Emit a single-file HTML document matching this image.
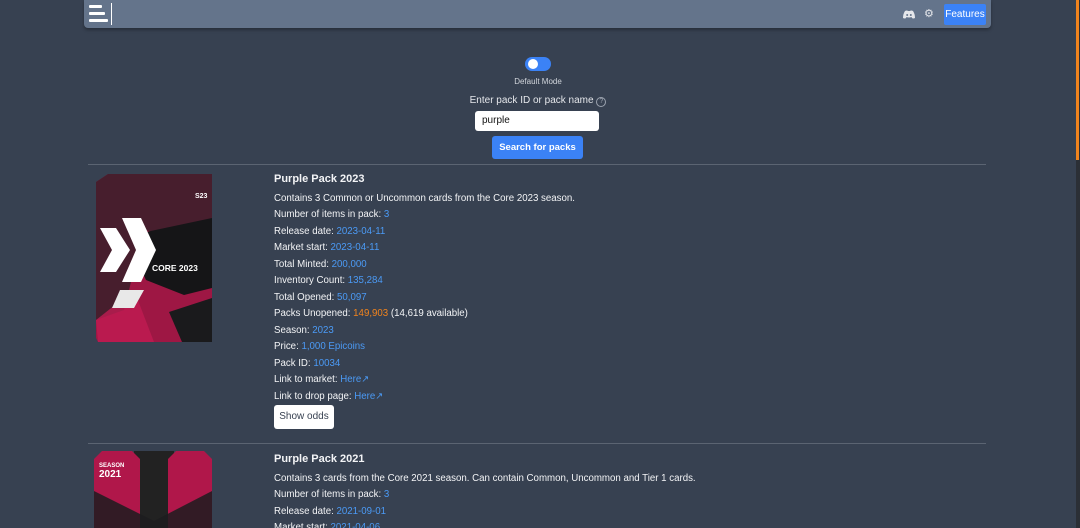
<!DOCTYPE html>
<html style="overflow:hidden;height:528px"><head><style>
body{margin:0;width:1080px;height:528px;overflow:hidden;background:#374151;font-family:"Liberation Sans",sans-serif;color:#f3f4f6;position:relative}
.nav{position:absolute;left:84px;top:0;width:907px;height:28px;background:#64748b;border-radius:0 0 4px 4px;box-shadow:0 2px 3px rgba(0,0,0,.3)}
.bar{position:absolute;left:5px;height:3px;background:#fff;border-radius:1px}
a,.b{color:#4b9af5}
.o{color:#f2841d}
.info{position:absolute;left:274px;font-size:9.7px;line-height:16.5px}
.info div{height:16.5px;white-space:nowrap}
.t{font-weight:bold;font-size:11px;margin-bottom:3px}
hr{position:absolute;left:88px;width:898px;border:0;border-top:1px solid #5b6472;margin:0}
</style></head><body>
<div class="nav">
<div class="bar" style="top:5px;width:13px"></div>
<div class="bar" style="top:12px;width:16px"></div>
<div class="bar" style="top:19px;width:19px"></div>
<div style="position:absolute;left:27px;top:3px;width:1px;height:22px;background:#fff"></div>
<svg style="position:absolute;left:819px;top:10px" width="12" height="9" viewBox="0 0 12 9"><path d="M2 1Q4 0 5 1H7Q8 0 10 1Q12 4 12 8Q10 9 9 8L8.5 7Q6 8 3.5 7L3 8Q2 9 0 8Q0 4 2 1Z" fill="#e5e7eb"/><circle cx="4.2" cy="5" r="1" fill="#64748b"/><circle cx="7.8" cy="5" r="1" fill="#64748b"/></svg>
<div style="position:absolute;left:840px;top:7px;font-size:11px;color:#e5e7eb">⚙</div>
<div style="position:absolute;left:860px;top:4px;width:42px;height:21px;background:#3b82f6;border-radius:2px;color:#fff;font-size:10px;line-height:21px;text-align:center">Features</div>
</div>
<div style="position:absolute;left:525px;top:57px;width:26px;height:14px;border-radius:7px;background:#3b82f6"><div style="position:absolute;left:3px;top:2px;width:10px;height:10px;border-radius:5px;background:#fff"></div></div>
<div style="position:absolute;left:0;width:1076px;top:77px;text-align:center;font-size:8px;color:#d1d5db">Default Mode</div>
<div style="position:absolute;left:0;width:1076px;top:95px;text-align:center;font-size:10px;color:#e5e7eb">Enter pack ID or pack name <span style="display:inline-block;width:8px;height:8px;border:1px solid #9ca3af;border-radius:50%;font-size:7px;line-height:8px;color:#9ca3af">?</span></div>
<div style="position:absolute;left:475px;top:111px;width:117px;height:20px;background:#fff;border-radius:3px;color:#111;font-size:10px;line-height:20px;padding-left:7px">purple</div>
<div style="position:absolute;left:492px;top:136px;width:91px;height:23px;background:#3b82f6;border-radius:3px;color:#fff;font-size:9.5px;font-weight:bold;line-height:23px;text-align:center">Search for packs</div>
<hr style="top:164px">
<svg style="position:absolute;left:94px;top:170px" width="120" height="173" viewBox="0 0 120 173">
<polygon points="2,12 14,4 118,4 118,168 112,172 4,172 2,168" fill="#9e1744"/>
<polygon points="2,12 14,4 118,4 118,60 100,70 50,60 30,140 2,150" fill="#2a2226" opacity=".75"/>
<polygon points="2,150 40,120 60,172 4,172" fill="#c01c52" opacity=".8"/>
<polygon points="52,62 118,48 118,118 90,125 52,110 40,85" fill="#151517"/>
<polygon points="75,142 118,128 118,172 88,172" fill="#1a1a1c"/>
<polygon points="28,48 47,48 62,80 47,112 28,112 42,80" fill="#fff"/>
<polygon points="6,58 22,58 36,80 22,102 6,102 18,80" fill="#fff"/>
<polygon points="26,120 50,120 40,138 18,138" fill="#e8e8e8"/>
<text x="58" y="101" fill="#fff" font-size="8.5" font-weight="bold" font-family="Liberation Sans">CORE 2023</text>
<text x="101" y="28" fill="#fff" font-size="7" font-weight="bold" font-family="Liberation Sans">S23</text>
</svg>
<div class="info" style="top:171px">
<div class="t">Purple Pack 2023</div>
<div>Contains 3 Common or Uncommon cards from the Core 2023 season.</div>
<div>Number of items in pack: <a>3</a></div>
<div>Release date: <a>2023-04-11</a></div>
<div>Market start: <a>2023-04-11</a></div>
<div>Total Minted: <a>200,000</a></div>
<div>Inventory Count: <a>135,284</a></div>
<div>Total Opened: <a>50,097</a></div>
<div>Packs Unopened: <span class="o">149,903</span> (14,619 available)</div>
<div>Season: <a>2023</a></div>
<div>Price: <a>1,000 Epicoins</a></div>
<div>Pack ID: <a>10034</a></div>
<div>Link to market: <a>Here↗</a></div>
<div>Link to drop page: <a>Here↗</a></div>
</div>
<div style="position:absolute;left:274px;top:405px;width:60px;height:24px;background:#fff;border-radius:3px;color:#374151;font-size:10px;line-height:24px;text-align:center">Show odds</div>
<hr style="top:443px">
<svg style="position:absolute;left:94px;top:451px" width="120" height="77" viewBox="0 0 120 77">
<rect x="40" y="0" width="40" height="77" fill="#222"/>
<polygon points="0,8 8,0 38,0 46,8 46,77 0,77" fill="#b0174a"/>
<polygon points="74,8 82,0 110,0 118,8 118,77 74,77" fill="#b0174a"/>
<polygon points="0,40 60,70 118,40 118,77 0,77" fill="#1c1c1e" opacity=".85"/>
<text x="5" y="16" fill="#fff" font-size="6" font-weight="bold" font-family="Liberation Sans">SEASON</text>
<text x="5" y="26" fill="#fff" font-size="10" font-weight="bold" font-family="Liberation Sans">2021</text>
</svg>
<div class="info" style="top:451px">
<div class="t">Purple Pack 2021</div>
<div>Contains 3 cards from the Core 2021 season. Can contain Common, Uncommon and Tier 1 cards.</div>
<div>Number of items in pack: <a>3</a></div>
<div>Release date: <a>2021-09-01</a></div>
<div>Market start: <a>2021-04-06</a></div>
</div>
<div style="position:absolute;left:1076px;top:0;width:4px;height:528px;background:#2b2f36"></div>
<div style="position:absolute;left:1076px;top:0;width:3px;height:160px;background:#f2841d"></div>
</body></html>
